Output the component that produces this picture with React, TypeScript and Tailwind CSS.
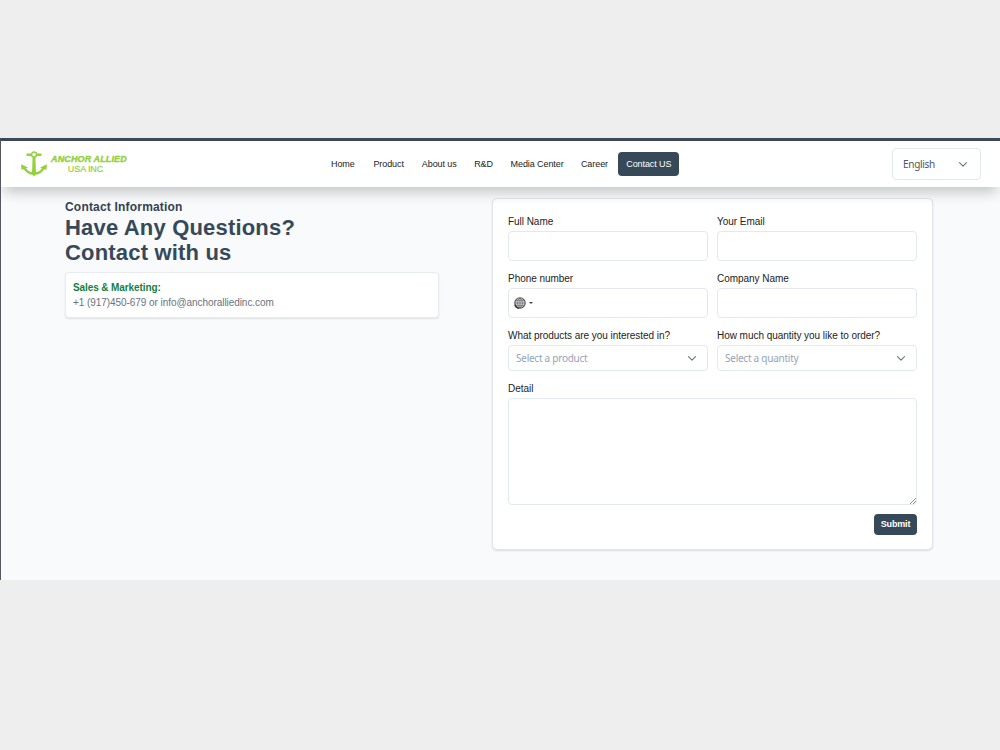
import type { ReactNode } from "react";

const NAV = [
  { label: "Home", width: "w-[24px]" },
  { label: "Product", width: "w-[30px]" },
  { label: "About us", width: "w-[34px]" },
  { label: "R&D", width: "w-[18px]" },
  { label: "Media Center", width: "w-[52px]" },
  { label: "Career", width: "w-[27px]" },
];

function AnchorLogo() {
  return (
    <svg width="27" height="26" viewBox="0 0 27 26" className="text-[#95d13c]">
      <circle cx="13" cy="3.6" r="2.500" fill="none" stroke="currentColor" strokeWidth="1.500" />
      <path d="M3.500 17C5.500 20.800 9 22.600 13 22.600s7.500-1.800 9.500-5.600" fill="none" stroke="currentColor" strokeWidth="2.600" />
      <path
        fill="currentColor"
        d="M5.400 3 6.200 2.400H10.200v2.600H6.200L5.400 4.400ZM20.600 3 19.800 2.400H15.800v2.600h4l.8-.6ZM11.600 6h2.800l.6 16.500-2 3.200L11 22.500ZM0 13.300 7 16.500.6 19ZM26 13.300 19 16.500l6.400 2.500Z"
      />
    </svg>
  );
}

function Chevron() {
  return (
    <svg width="8" height="5" viewBox="0 0 8 5" fill="none" stroke="#6b7280" strokeWidth="1.1">
      <path d="M.5.6 4 4.100 7.500.6" strokeLinecap="round" strokeLinejoin="round" />
    </svg>
  );
}

function Globe() {
  return (
    <svg width="12" height="12" viewBox="0 0 12 12" fill="none" stroke="#555">
      <circle cx="6" cy="6" r="5.200" fill="#ccc" strokeWidth="1.100" />
      <path d="M6 1v10M1 6h10M2 3.400h8M2 8.600h8M6 1C2.800 3.500 2.800 8.500 6 11M6 1c3.200 2.500 3.200 7.500 0 10" strokeWidth=".5" />
      <path d="M.8 7.500c.5 2 2 3.500 4.200 3.800" stroke="#333" strokeWidth="1.200" />
    </svg>
  );
}

function Label({ children }: { children: ReactNode }) {
  return (
    <div className="h-[17px] whitespace-nowrap pt-px text-[10px] leading-[14px] tracking-[-0.04px] text-[#222]">
      {children}
    </div>
  );
}

function Field({ label, children }: { label: string; children?: ReactNode }) {
  return (
    <div className="h-[57px]">
      <Label>{label}</Label>
      <div className="flex h-[30px] items-center rounded-[4px] border border-[#e2e8f0] px-[5px]">{children}</div>
    </div>
  );
}

function SelectField({ label, placeholder }: { label: string; placeholder: string }) {
  return (
    <div className="h-[53px]">
      <Label>{label}</Label>
      <div className="flex h-[26px] items-center justify-between rounded-[4px] border border-[#e2e8f0] pl-[7px] pr-[11px]">
        <span className="font-['Noto_Sans',sans-serif] text-[10px] tracking-[-0.25px] text-[#94a3b8]">
          {placeholder}
        </span>
        <Chevron />
      </div>
    </div>
  );
}

function Header() {
  return (
    <header className="relative flex h-[46px] items-center bg-white shadow-[0_8px_14px_-3px_rgba(0,0,0,0.22)]">
      <div className="flex w-[310px] items-center pl-5">
        <AnchorLogo />
        <div className="ml-[3px] w-[77px] text-center text-[#95d13c]">
          <div className="whitespace-nowrap text-left text-[9px] font-bold italic leading-[9px] tracking-[0.13px] [-webkit-text-stroke:0.4px]">
            ANCHOR ALLIED
          </div>
          <div className="pr-2 text-[9px] leading-[10px] tracking-[-0.1px] [-webkit-text-stroke:0.2px]">USA INC</div>
        </div>
      </div>
      <nav className="ml-5 flex items-center whitespace-nowrap text-[9px] tracking-[-0.08px] text-[#222]">
        {NAV.map((item) => (
          <a key={item.label} className={`mr-[18.400px] pt-0.5 ${item.width}`}>
            {item.label}
          </a>
        ))}
        <a className="-ml-2 flex h-6 w-[61px] items-center justify-center rounded-[4px] bg-[#364958] pt-px text-white">
          Contact US
        </a>
      </nav>
      <div className="ml-auto mr-[19px] flex h-8 w-[89px] items-center justify-between rounded-[4px] border border-[#e2e8f0] pl-[10px] pr-[13px]">
        <span className="font-['Noto_Sans',sans-serif] text-[10px] tracking-[-0.3px] text-[#4b5563]">English</span>
        <Chevron />
      </div>
    </header>
  );
}

function ContactInfo() {
  return (
    <section className="w-[374px] pt-[12px]">
      <h2 className="text-[12px] font-bold leading-4 tracking-[0.19px] text-[#374151]">Contact Information</h2>
      <h1 className="whitespace-nowrap text-[22px] font-bold leading-[25px] tracking-[0.18px] text-[#364958]">
        Have Any Questions?
        <br />
        Contact with us
      </h1>
      <div className="mt-[7px] h-[46px] rounded-[4px] border border-[#e9ecef] bg-white px-[7px] pt-[7px] shadow-[0_1px_2px_rgba(0,0,0,0.1)]">
        <div className="text-[10px] font-bold leading-[15px] tracking-[-0.1px] text-[#15803d]">
          Sales &amp; Marketing:
        </div>
        <div className="text-[10px] leading-[15px] tracking-[-0.06px] text-[#6b7280]">
          +1 (917)450-679 or info@anchoralliedinc.com
        </div>
      </div>
    </section>
  );
}

function ContactForm() {
  return (
    <form className="mt-[11px] h-[352px] w-[441px] rounded-[5px] border border-[#e2e5e9] bg-white px-[15px] pt-[15px] shadow-[0_1px_2px_rgba(0,0,0,0.12)]">
      <div className="grid grid-cols-2 gap-x-[9px]">
        <Field label="Full Name" />
        <Field label="Your Email" />
        <Field label="Phone number">
          <Globe />
          <span className="ml-[3px] border-x-2 border-t-2 border-x-transparent border-t-[#444]" />
        </Field>
        <Field label="Company Name" />
        <SelectField label="What products are you interested in?" placeholder="Select a product" />
        <SelectField label="How much quantity you like to order?" placeholder="Select a quantity" />
      </div>
      <Label>Detail</Label>
      <div className="flex h-[107px] items-end justify-end rounded-[4px] border border-[#e2e8f0]">
        <svg width="6" height="6" viewBox="0 0 6 6" stroke="#777" strokeWidth=".8">
          <path d="M0 6 6 0M3 6l3-3" />
        </svg>
      </div>
      <div className="mt-[9px] flex justify-end">
        <button
          type="button"
          className="h-[21px] w-[43px] rounded-[4px] bg-[#364958] text-[9px] font-bold tracking-[-0.15px] text-white"
        >
          Submit
        </button>
      </div>
    </form>
  );
}

export default function App() {
  return (
    <div className="h-[750px] w-[1000px] overflow-hidden bg-[#eeeeee] pt-[138px] font-['Liberation_Sans',sans-serif]">
      <div className="h-[442px] overflow-hidden border-l border-t-[3px] border-l-[#55565f] border-t-[#3b4957] bg-[#f8fafc]">
        <Header />
        <main className="flex justify-between pl-16 pr-[67px]">
          <ContactInfo />
          <ContactForm />
        </main>
      </div>
    </div>
  );
}
